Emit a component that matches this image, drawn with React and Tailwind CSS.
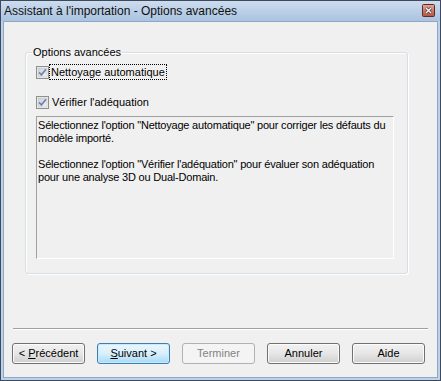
import React from "react";

function CheckBox({ label, focused }) {
  return (
    <label className="flex items-center h-[16px]">
      <svg width="13" height="13" viewBox="0 0 13 13" className="shrink-0">
        <defs>
          <linearGradient id="cbg" x1="0" y1="0" x2="1" y2="1">
            <stop offset="0" stopColor="#cfcfcf" />
            <stop offset="1" stopColor="#f4f4f4" />
          </linearGradient>
        </defs>
        <rect x="0.5" y="0.5" width="12" height="12" fill="#f4f4f4" stroke="#8f8f8f" />
        <rect x="2" y="2" width="9" height="9" fill="url(#cbg)" stroke="#c4c4c4" strokeWidth="0.6" />
        <path d="M3 6.3 L5.4 8.8 L10 3.2" fill="none" stroke="#6f86b8" strokeWidth="1.8" />
      </svg>
      <span
        className={
          "ml-[1px] px-[1px] leading-[14px] " +
          (focused ? "outline outline-1 outline-dotted outline-black" : "border border-transparent")
        }
      >
        {label}
      </span>
    </label>
  );
}

function Button({ children, variant }) {
  const base =
    "w-[73px] h-[21px] rounded-[3px] border flex items-center justify-center text-[11px]";
  if (variant === "default")
    return (
      <button className={base + " border-[#3c7fb1] bg-gradient-to-b from-[#eaf6fd] via-[#d9f0fc] to-[#a7d9f5] text-black shadow-[inset_0_0_0_1px_#c9eafc]"}>
        <span>{children}</span>
      </button>
    );
  if (variant === "disabled")
    return (
      <button className={base + " border-[#adb2b5] bg-[#f4f4f4] text-[#838383]"}>
        <span>{children}</span>
      </button>
    );
  return (
    <button className={base + " border-[#707070] bg-gradient-to-b from-[#f2f2f2] via-[#e6e6e6] to-[#cfcfcf] text-black shadow-[inset_0_0_0_1px_#fbfbfb]"}>
      <span>{children}</span>
    </button>
  );
}

export default function App() {
  return (
    <div
      className="w-[441px] h-[381px] border border-[#3b4a5c] bg-[#bdd1e9] flex flex-col text-black"
      style={{ fontFamily: '"Liberation Sans", Arial, sans-serif' }}
    >
      <div className="h-[20px] flex items-center justify-between pl-[3px] pr-[5px] bg-gradient-to-b from-[#cddcee] to-[#a9c3e1]">
        <span className="text-[12px] leading-none text-[#101010]">
          Assistant à l'importation - Options avancées
        </span>
        <svg width="13" height="13" viewBox="0 0 13 13" className="mb-[1px]">
          <defs>
            <linearGradient id="cls" x1="0" y1="0" x2="0" y2="1">
              <stop offset="0" stopColor="#e2a797" />
              <stop offset="1" stopColor="#b3523f" />
            </linearGradient>
          </defs>
          <rect x="0.5" y="0.5" width="12" height="12" rx="1" fill="url(#cls)" stroke="#5e2a22" />
          <path d="M4 4 L9 9 M9 4 L4 9" stroke="#4a2a25" strokeWidth="2.6" />
          <path d="M4 4 L9 9 M9 4 L4 9" stroke="#ffffff" strokeWidth="1.4" />
        </svg>
      </div>
      <div className="flex-1 mx-[2px] mb-[2px] border border-[#8fa7c2] bg-[#f0f0f0] flex flex-col text-[11px]">
        <fieldset className="mt-[23px] ml-[21px] w-[383px] h-[229px] border border-[#d5dfe5] rounded-[3px] shadow-[inset_1px_1px_0_#ffffff,1px_1px_0_#ffffff] pl-[10px] pr-[13px]">
          <legend className="-ml-[4px] px-[1px] leading-[14px]">Options avancées</legend>
          <div className="mt-[5px] flex flex-col gap-[14px]">
            <CheckBox label="Nettoyage automatique" focused />
            <CheckBox label="Vérifier l'adéquation" />
          </div>
          <div className="mt-[6px] h-[143px] border border-t-[#a0a0a0] border-l-[#a0a0a0] border-r-white border-b-white pl-[1px] pt-[2px] leading-[13px] tracking-[-0.2px]">
            <p>
              Sélectionnez l'option "Nettoyage automatique" pour corriger les défauts du
              modèle importé.
            </p>
            <p className="mt-[13px]">
              Sélectionnez l'option "Vérifier l'adéquation" pour évaluer son adéquation
              pour une analyse 3D ou Dual-Domain.
            </p>
          </div>
        </fieldset>
        <div className="flex-1" />
        <div className="mx-[9px] h-[2px] border-t border-[#a0a0a0] border-b border-b-white" />
        <div className="mt-[13px] mb-[13px] ml-[8px] flex gap-[12px]">
          <Button>
            &lt; <span className="underline">P</span>récédent
          </Button>
          <Button variant="default">
            <span className="underline">S</span>uivant &gt;
          </Button>
          <Button variant="disabled">Terminer</Button>
          <Button>Annuler</Button>
          <Button>Aide</Button>
        </div>
      </div>
    </div>
  );
}
